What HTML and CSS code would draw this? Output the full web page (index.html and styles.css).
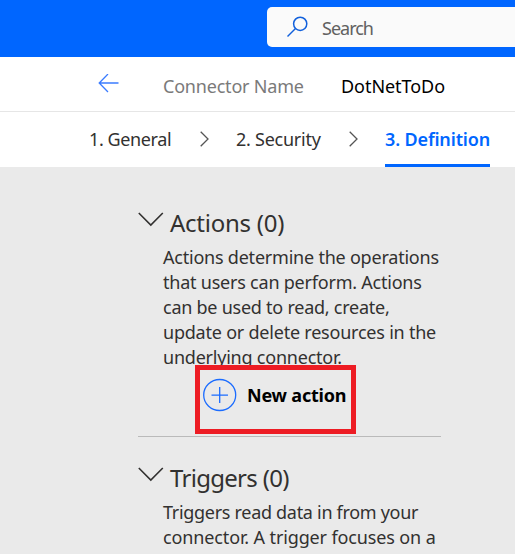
FILE: index.html
```
<!DOCTYPE html>
<html lang="en">
<head>
<meta charset="utf-8">
<title>Connector definition</title>
<link rel="stylesheet" href="styles.css">
</head>
<body>
<header class="topbar">
  <div class="search">
    <svg class="search-icon" width="22" height="22" viewBox="0 0 22 22"><circle cx="13.2" cy="7.8" r="6.6"/><path d="M8.5 12.5L.5 20.5"/></svg>
    <span class="search-text">Search</span>
  </div>
</header>
<div class="namebar">
  <svg class="back" width="21" height="20" viewBox="0 0 21 20"><path d="M10 0L1.2 9L10 18M1.2 9H20.5"/></svg>
  <span class="label">Connector Name</span>
  <span class="name">DotNetToDo</span>
</div>
<nav class="tabs">
  <span class="tab general">1. General</span>
  <svg class="sep" width="9" height="16" viewBox="0 0 9 16"><path d="M.7 .8L8 8L.7 15.2"/></svg>
  <span class="tab security">2. Security</span>
  <svg class="sep" width="9" height="16" viewBox="0 0 9 16"><path d="M.7 .8L8 8L.7 15.2"/></svg>
  <span class="tab definition">3. Definition</span>
</nav>
<main class="panel">
  <section class="group actions">
    <h2><svg class="chevron" width="26" height="15" viewBox="0 0 26 15"><path d="M.8 1L12.8 13L24.8 1"/></svg><span class="title">Actions (0)</span></h2>
    <p><span class="line a1">Actions determine the operations</span><span class="line a2">that users can perform. Actions</span><span class="line a3">can be used to read, create,</span><span class="line a4">update or delete resources in the</span><span class="line a5">underlying connector.</span></p>
    <div class="new-action">
      <svg class="plus" width="34" height="34" viewBox="0 0 34 34"><ellipse cx="16.7" cy="17" rx="16" ry="15.5"/><path d="M8.5 17.2H25M16.7 9V25"/></svg>
      <span class="new-text">New action</span>
    </div>
  </section>
  <section class="group triggers">
    <h2><svg class="chevron" width="26" height="15" viewBox="0 0 26 15"><path d="M.8 1L12.8 13L24.8 1"/></svg><span class="title">Triggers (0)</span></h2>
    <p><span class="line t1">Triggers read data in from your</span><span class="line t2">connector. A trigger focuses on a</span></p>
  </section>
</main>
</body>
</html>
```
FILE: styles.css
```
* { box-sizing: border-box; }
body {
  margin: 0;
  width: 515px;
  height: 554px;
  overflow: hidden;
  background: #fff;
  color: #323130;
  font: 18px/25px "Noto Sans", "Open Sans", sans-serif;
  white-space: nowrap;
}
svg { display: block; flex: none; fill: none; stroke-width: 1.3; }
.topbar { height: 57px; padding: 7px 0 0 267px; background: #0066ff; }
.search {
  display: flex;
  align-items: center;
  height: 40px;
  padding-left: 20px;
  border-radius: 5px 0 0 5px;
  background: #fafafa;
}
.search-icon { stroke: #1160dc; stroke-width: 1.5; }
.search-text { margin-left: 13px; padding-top: 2px; color: #616161; letter-spacing: -1px; }
.namebar { display: flex; height: 55px; padding: 17px 0 0 98px; border-bottom: 1px solid #e6e6e6; }
.back { stroke: #3b7cff; }
.label { width: 178px; margin-left: 44px; color: #7a7a7a; letter-spacing: -0.2px; }
.name { color: #000; letter-spacing: -0.05px; }
.tabs { display: flex; height: 55px; padding: 15px 0 0 89px; }
.sep { margin-top: 4px; stroke: #555; }
.tab { height: 40px; letter-spacing: -0.4px; }
.general { width: 111px; }
.security { width: 104px; margin-left: 27px; letter-spacing: -0.25px; }
.general, .security { flex: none; }
.security + .sep { margin-left: 9px; }
.definition { width: 105px; margin-left: 27px; border-bottom: 3px solid #0066ff; color: #0066ff; font-weight: 600; letter-spacing: -0.15px; }
.panel { height: 387px; padding: 41px 74px 0 138px; background: #eaeaea; }
.actions { height: 229px; border-bottom: 1px solid #bababa; }
.triggers { padding-top: 26px; }
h2 { display: flex; height: 37px; margin: 0; font-size: 24px; font-weight: 400; line-height: 30px; }
.chevron { margin-top: 4px; stroke: #323130; stroke-width: 1.6; }
.title { margin-left: 6px; letter-spacing: -0.25px; }
.triggers .title { letter-spacing: -0.7px; }
p { margin: 0 0 0 25px; }
.line { display: block; letter-spacing: -0.22px; }
.a3 { letter-spacing: -0.25px; }
.t1 { letter-spacing: -0.3px; }
.t2 { letter-spacing: -0.13px; }
.new-action {
  position: relative;
  top: -5px;
  display: flex;
  width: 161px;
  height: 69px;
  margin-left: 57px;
  padding: 8px 0 0 3px;
  border: 5px solid #ed1c24;
}
.plus { stroke: #1b6cff; }
.new-text { margin: 5px 0 0 10px; color: #000; font-weight: 700; letter-spacing: -0.2px; }
```
